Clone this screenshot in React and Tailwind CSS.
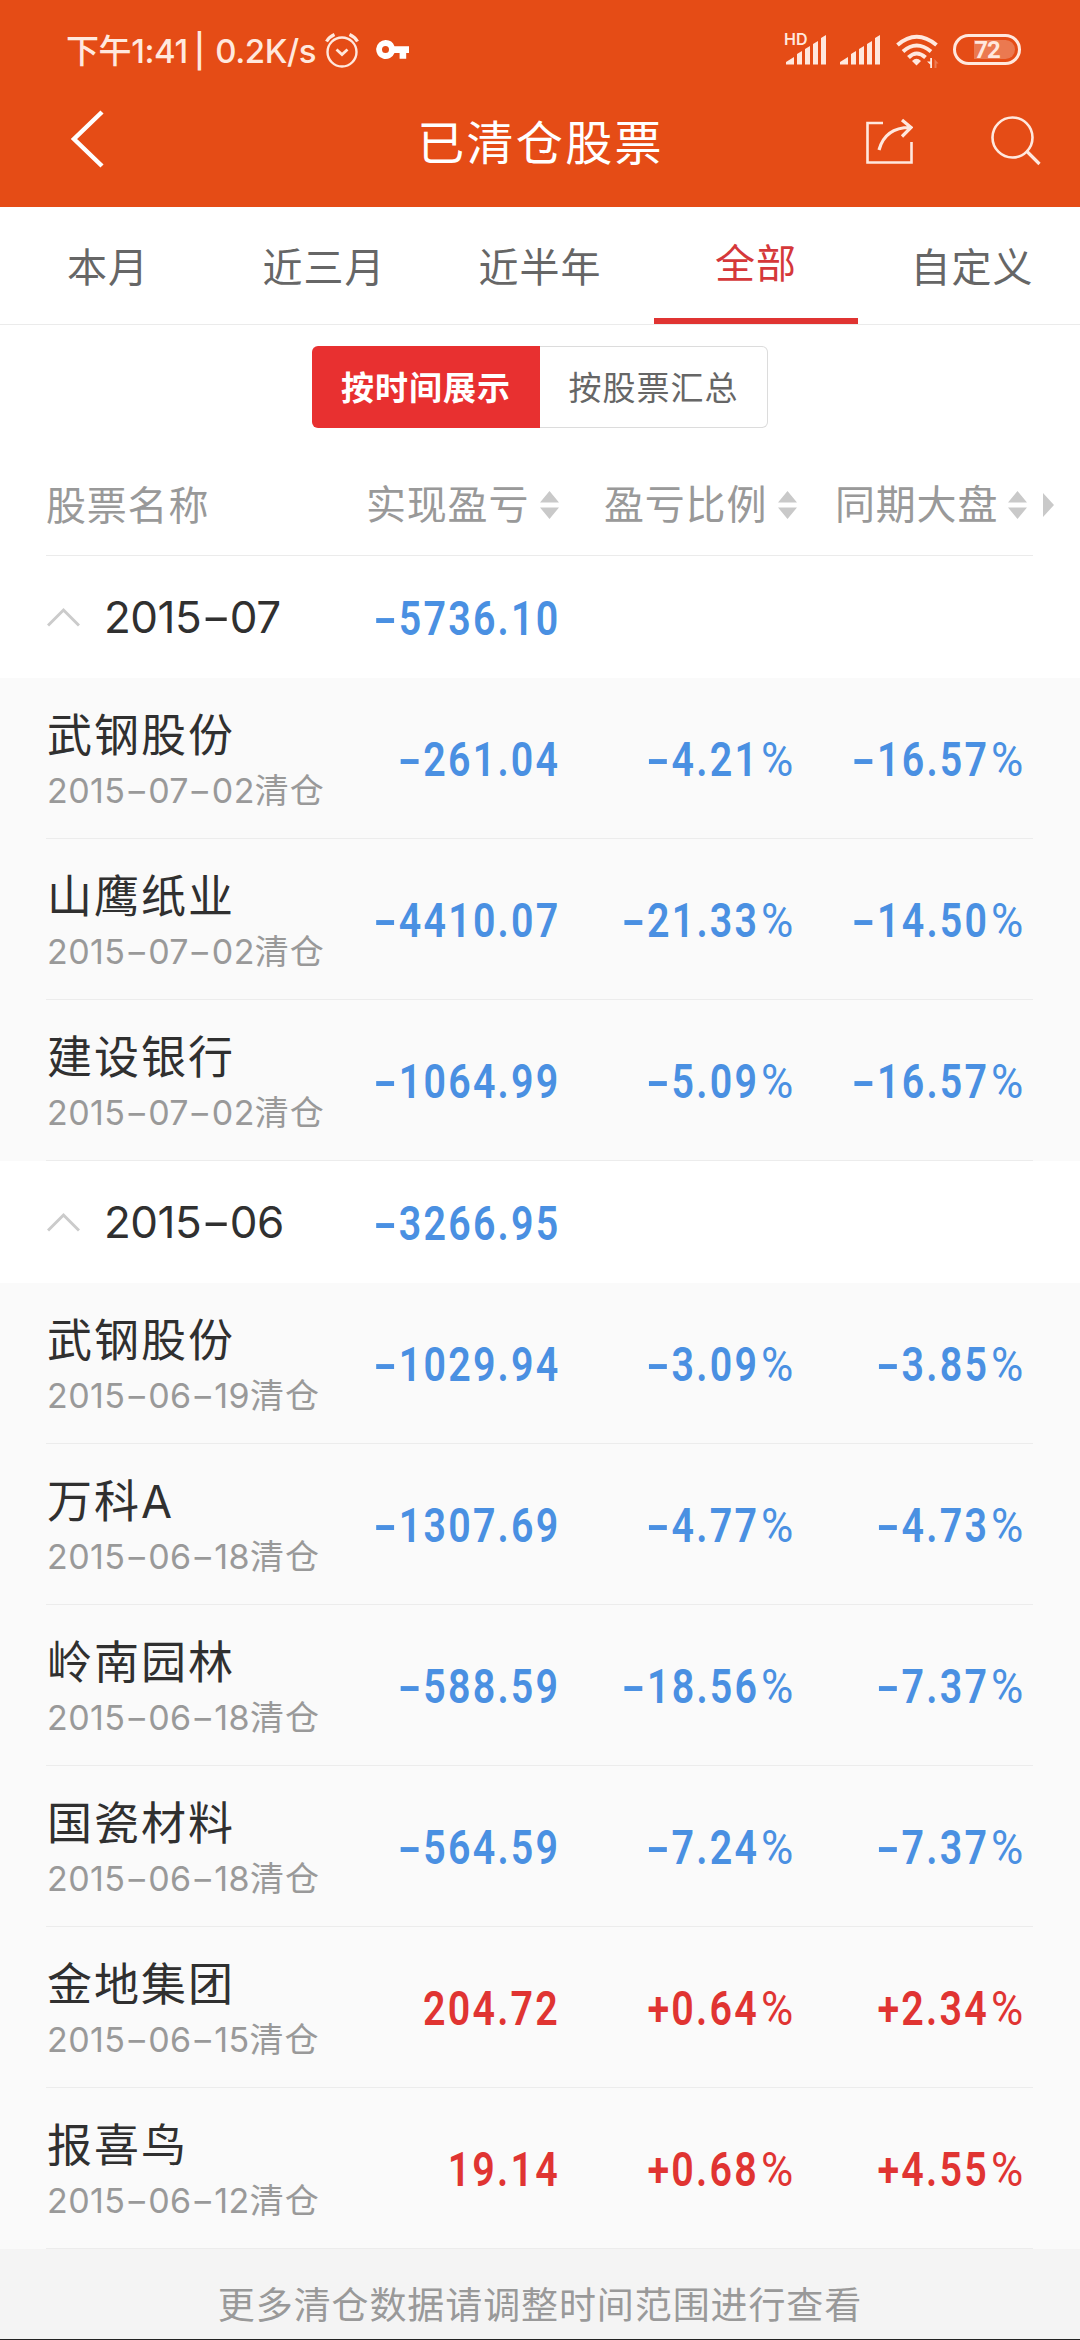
import { Fragment } from "react";

const months = [
  {
    month: "2015-07",
    total: "-5736.10",
    stocks: [
      { name: "武钢股份", date: "2015-07-02", profit: "-261.04", ratio: "-4.21%", market: "-16.57%" },
      { name: "山鹰纸业", date: "2015-07-02", profit: "-4410.07", ratio: "-21.33%", market: "-14.50%" },
      { name: "建设银行", date: "2015-07-02", profit: "-1064.99", ratio: "-5.09%", market: "-16.57%" },
    ],
  },
  {
    month: "2015-06",
    total: "-3266.95",
    stocks: [
      { name: "武钢股份", date: "2015-06-19", profit: "-1029.94", ratio: "-3.09%", market: "-3.85%" },
      { name: "万科A", date: "2015-06-18", profit: "-1307.69", ratio: "-4.77%", market: "-4.73%" },
      { name: "岭南园林", date: "2015-06-18", profit: "-588.59", ratio: "-18.56%", market: "-7.37%" },
      { name: "国瓷材料", date: "2015-06-18", profit: "-564.59", ratio: "-7.24%", market: "-7.37%" },
      { name: "金地集团", date: "2015-06-15", profit: "204.72", ratio: "+0.64%", market: "+2.34%" },
      { name: "报喜鸟", date: "2015-06-12", profit: "19.14", ratio: "+0.68%", market: "+4.55%" },
    ],
  },
];

const tabs = ["本月", "近三月", "近半年", "全部", "自定义"];

const Signal = () => (
  <svg className="h-[30px] w-[40px]" viewBox="0 0 40 30" fill="currentColor">
    <path d="M0 29.500v-2.500l8-5v7.500zM11 19l5-3v13.500h-5zM19 14l5-3v18.500h-5zM27 9l5-3v23.500h-5zM35 3l5-3v29.500h-5z" />
  </svg>
);

const StatusBar = () => (
  <div className="flex h-[68px] items-end justify-between pr-[59px] pl-[66px] text-[#ffe8de]">
    <div className="flex h-[36px] items-center">
      <span className="w-[259px] pt-[2px] text-[33px] leading-[36px] font-medium tracking-[-.400px] whitespace-nowrap">
        下午1:41<span className="mr-[2px] ml-[6px]">|</span> 0.2K/s
      </span>
      <svg className="h-[36px] w-[34px]" viewBox="0 0 34 36" fill="none" stroke="currentColor" strokeWidth="2.400">
        <circle cx="17" cy="20" r="14.500" />
        <path d="M11.500 17.500l5.500 5 5.500-5" strokeWidth="2.800" />
        <path d="M1.500 9.500Q4 5 9.500 2.500M32.500 9.500Q30 5 24.500 2.500" strokeWidth="3.200" />
      </svg>
      <svg className="ml-[17px] h-[20px] w-[33px]" viewBox="0 0 33 20" fill="white">
        <path fillRule="evenodd" d="M9.500 0a9.500 9.500 0 0 1 9 6.200H33v6.800h-2.800v5.800h-6.600V13h-5.100A9.500 9.500 0 1 1 9.500 0zm0 6a3.500 3.500 0 1 0 0 7 3.500 3.500 0 0 0 0-7z" />
      </svg>
    </div>
    <div className="flex h-[36px] items-start">
      <div className="relative pt-[3px]">
        <span className="absolute -top-px -left-[2px] text-[16px] leading-[16px] font-semibold">HD</span>
        <Signal />
      </div>
      <div className="ml-[14px] pt-[3px]">
        <Signal />
      </div>
      <svg className="mt-[2px] ml-[16px] h-[35px] w-[43px]" viewBox="0 0 43 35" fill="none" stroke="currentColor" strokeWidth="4">
        <path d="M1.500 11Q20.500-5.500 40.500 11" />
        <path d="M7 17.500Q20.500 5.500 35 17.500" />
        <path d="M12.500 23.500Q20.500 15.500 29.500 23.500" />
        <path d="M20.500 31.500l-4.500-4.500q4.500-4.500 9 0z" fill="currentColor" stroke="none" />
        <path d="M36 24v10h-1.800v-3.500l-3.200-3h3.200V24z" fill="currentColor" stroke="none" />
        <path d="M38.500 34v-9l4 4.500h-2v4.500z" fill="currentColor" stroke="none" opacity=".3" />
      </svg>
      <div className="relative mt-[2px] ml-[14px] flex h-[31px] w-[68px] items-center justify-center rounded-full border-[3px] border-current">
        <div className="absolute inset-y-[3px] right-[3px] w-[41px] rounded-r-full bg-white/25" />
        <span className="relative font-['Roboto',sans-serif] text-[24px] leading-none font-bold tracking-[-1px]">72</span>
      </div>
    </div>
  </div>
);

const TitleBar = () => (
  <div className="flex h-[139px] items-start justify-between pr-[39px] pl-[70px] text-white">
    <svg className="mt-[41px] h-[60px] w-[36px]" viewBox="0 0 36 60" fill="none" stroke="currentColor" strokeWidth="4.500">
      <path d="M32 3L4 30l28 27" />
    </svg>
    <h1 className="mt-[40px] ml-[110px] text-[47px] leading-[70px] tracking-[2.300px]">已清仓股票</h1>
    <div className="mt-[48px] flex gap-[78px] text-[#ffe8de]">
      <svg className="h-[50px] w-[48px]" viewBox="0 0 48 50" fill="none" stroke="currentColor" strokeWidth="2.600">
        <path d="M18 7H2.500v39.500H46.500V26" />
        <path d="M14 34Q20 11.500 45 11.500M37 4l9 7.500-9 9" strokeWidth="3.200" />
      </svg>
      <svg className="h-[50px] w-[50px]" viewBox="0 0 50 50" fill="none" stroke="currentColor" strokeWidth="2.600">
        <circle cx="21.500" cy="21.500" r="20" />
        <path d="M35.500 35L48.500 48" strokeWidth="3.200" />
      </svg>
    </div>
  </div>
);

const SortIcon = () => (
  <svg className="h-[28px] w-[19px]" viewBox="0 0 19 28" fill="#c9c9c9">
    <path d="M9.500 0L19 11.500H0zM9.500 28L19 16.500H0z" />
  </svg>
);

const ColumnTitle = ({ label, className }) => (
  <div className={"flex items-center justify-between " + className}>
    <span>{label}</span>
    <SortIcon />
  </div>
);

// long dashes between the date parts
const DateText = ({ value }) =>
  value.split("-").map((part, i) => (
    <Fragment key={i}>
      {i > 0 && <span className="mx-[.1em] inline-block scale-x-[1.500]">-</span>}
      {part}
    </Fragment>
  ));

const Amount = ({ value, className }) => {
  const negative = value.startsWith("-");
  const percent = value.endsWith("%");

  return (
    <div
      className={
        "flex justify-end pt-[3px] font-['Roboto',sans-serif] text-[48px] leading-none font-semibold tracking-[2.700px] " +
        (negative ? "text-[#4a90e2] " : "text-[#e03432] ") +
        className
      }
    >
      <span className="-mr-[2px] origin-right scale-x-[.820] whitespace-nowrap">
        {negative && <span className="-mr-[3px] inline-block origin-right scale-x-[1.700]">-</span>}
        {value.replace(/[-%]/g, "")}
        {percent && <span className="ml-[7px] inline-block origin-right scale-x-[1.120] font-normal">%</span>}
      </span>
    </div>
  );
};

const MonthRow = ({ month, total }) => (
  <div className="flex h-[122px] items-center bg-white pl-[47px]">
    <svg className="h-[20px] w-[33px]" viewBox="0 0 33 20" fill="none" stroke="#cbcbcb" strokeWidth="3">
      <path d="M1 18.500L16.500 3 32 18.500" />
    </svg>
    <span className="ml-[24px] w-[200px] text-[44px] leading-none tracking-[-.500px] text-[#303030]">
      <DateText value={month} />
    </span>
    <Amount value={total} className="w-[254px]" />
  </div>
);

const StockRow = ({ stock }) => (
  <div className="h-[161px] bg-[#fafafa] pr-[47px] pl-[46px]">
    <div className="flex h-full items-center border-b border-[#ececec]">
      <div className="w-[290px] pt-[6px] pl-px">
        <div className="text-[45px] leading-[60px] tracking-[2px] text-[#303030]">{stock.name}</div>
        <div className="text-[34px] leading-[50px] tracking-[1px] whitespace-nowrap text-[#999]">
          <span className="tracking-[.400px]">
            <DateText value={stock.date} />
          </span>
          清仓
        </div>
      </div>
      <Amount value={stock.profit} className="w-[222px]" />
      <Amount value={stock.ratio} className="w-[236px]" />
      <Amount value={stock.market} className="w-[230px]" />
    </div>
  </div>
);

export default function App() {
  return (
    <div className="flex h-[2340px] w-[1080px] flex-col overflow-hidden bg-white font-['Inter','Noto_Sans_CJK_SC',sans-serif]">
      <header className="h-[207px] bg-[#e54c16]">
        <StatusBar />
        <TitleBar />
      </header>

      <nav className="grid h-[118px] grid-cols-5 border-b border-[#ebebeb] text-[40px] tracking-[1px] text-[#666]">
        {tabs.map((tab) =>
          tab === "全部" ? (
            <div key={tab} className="mx-[6px] flex items-center justify-center border-b-[6px] border-[#e03432] pt-[3px] text-[#d5383a]">
              {tab}
            </div>
          ) : (
            <div key={tab} className="flex items-center justify-center pt-[4px]">
              {tab}
            </div>
          )
        )}
      </nav>

      <div className="mt-[21px] flex h-[82px] justify-center text-[33px] tracking-[1px]">
        <button className="w-[228px] rounded-l-[6px] bg-[#e83030] pt-[3px] font-bold text-white">按时间展示</button>
        <button className="w-[228px] rounded-r-[6px] border border-l-0 border-[#dcdcdc] pt-[3px] text-[#666]">按股票汇总</button>
      </div>

      <div className="pr-[26px] pl-[46px]">
        <div className="flex h-[128px] items-center pt-[25px] text-[40px] tracking-[.800px] whitespace-nowrap text-[#999]">
          <span className="w-[320px] pt-[2px]">股票名称</span>
          <ColumnTitle label="实现盈亏" className="w-[193px]" />
          <ColumnTitle label="盈亏比例" className="ml-[45px] w-[193px]" />
          <ColumnTitle label="同期大盘" className="ml-[38px] w-[192px]" />
          <svg className="ml-[16px] h-[24px] w-[11px]" viewBox="0 0 11 24" fill="#c9c9c9">
            <path d="M0 0l11 12L0 24z" />
          </svg>
        </div>
        <div className="mr-[21px] -mt-px h-px bg-[#ebebeb]" />
      </div>

      {months.map((item) => (
        <section key={item.month}>
          <MonthRow month={item.month} total={item.total} />
          {item.stocks.map((stock) => (
            <StockRow key={stock.name} stock={stock} />
          ))}
        </section>
      ))}

      <footer className="flex flex-1 items-center justify-center border-b border-[#222] bg-[#f4f4f4] pt-[23px] text-[37px] tracking-[.900px] text-[#999]">
        更多清仓数据请调整时间范围进行查看
      </footer>
    </div>
  );
}
